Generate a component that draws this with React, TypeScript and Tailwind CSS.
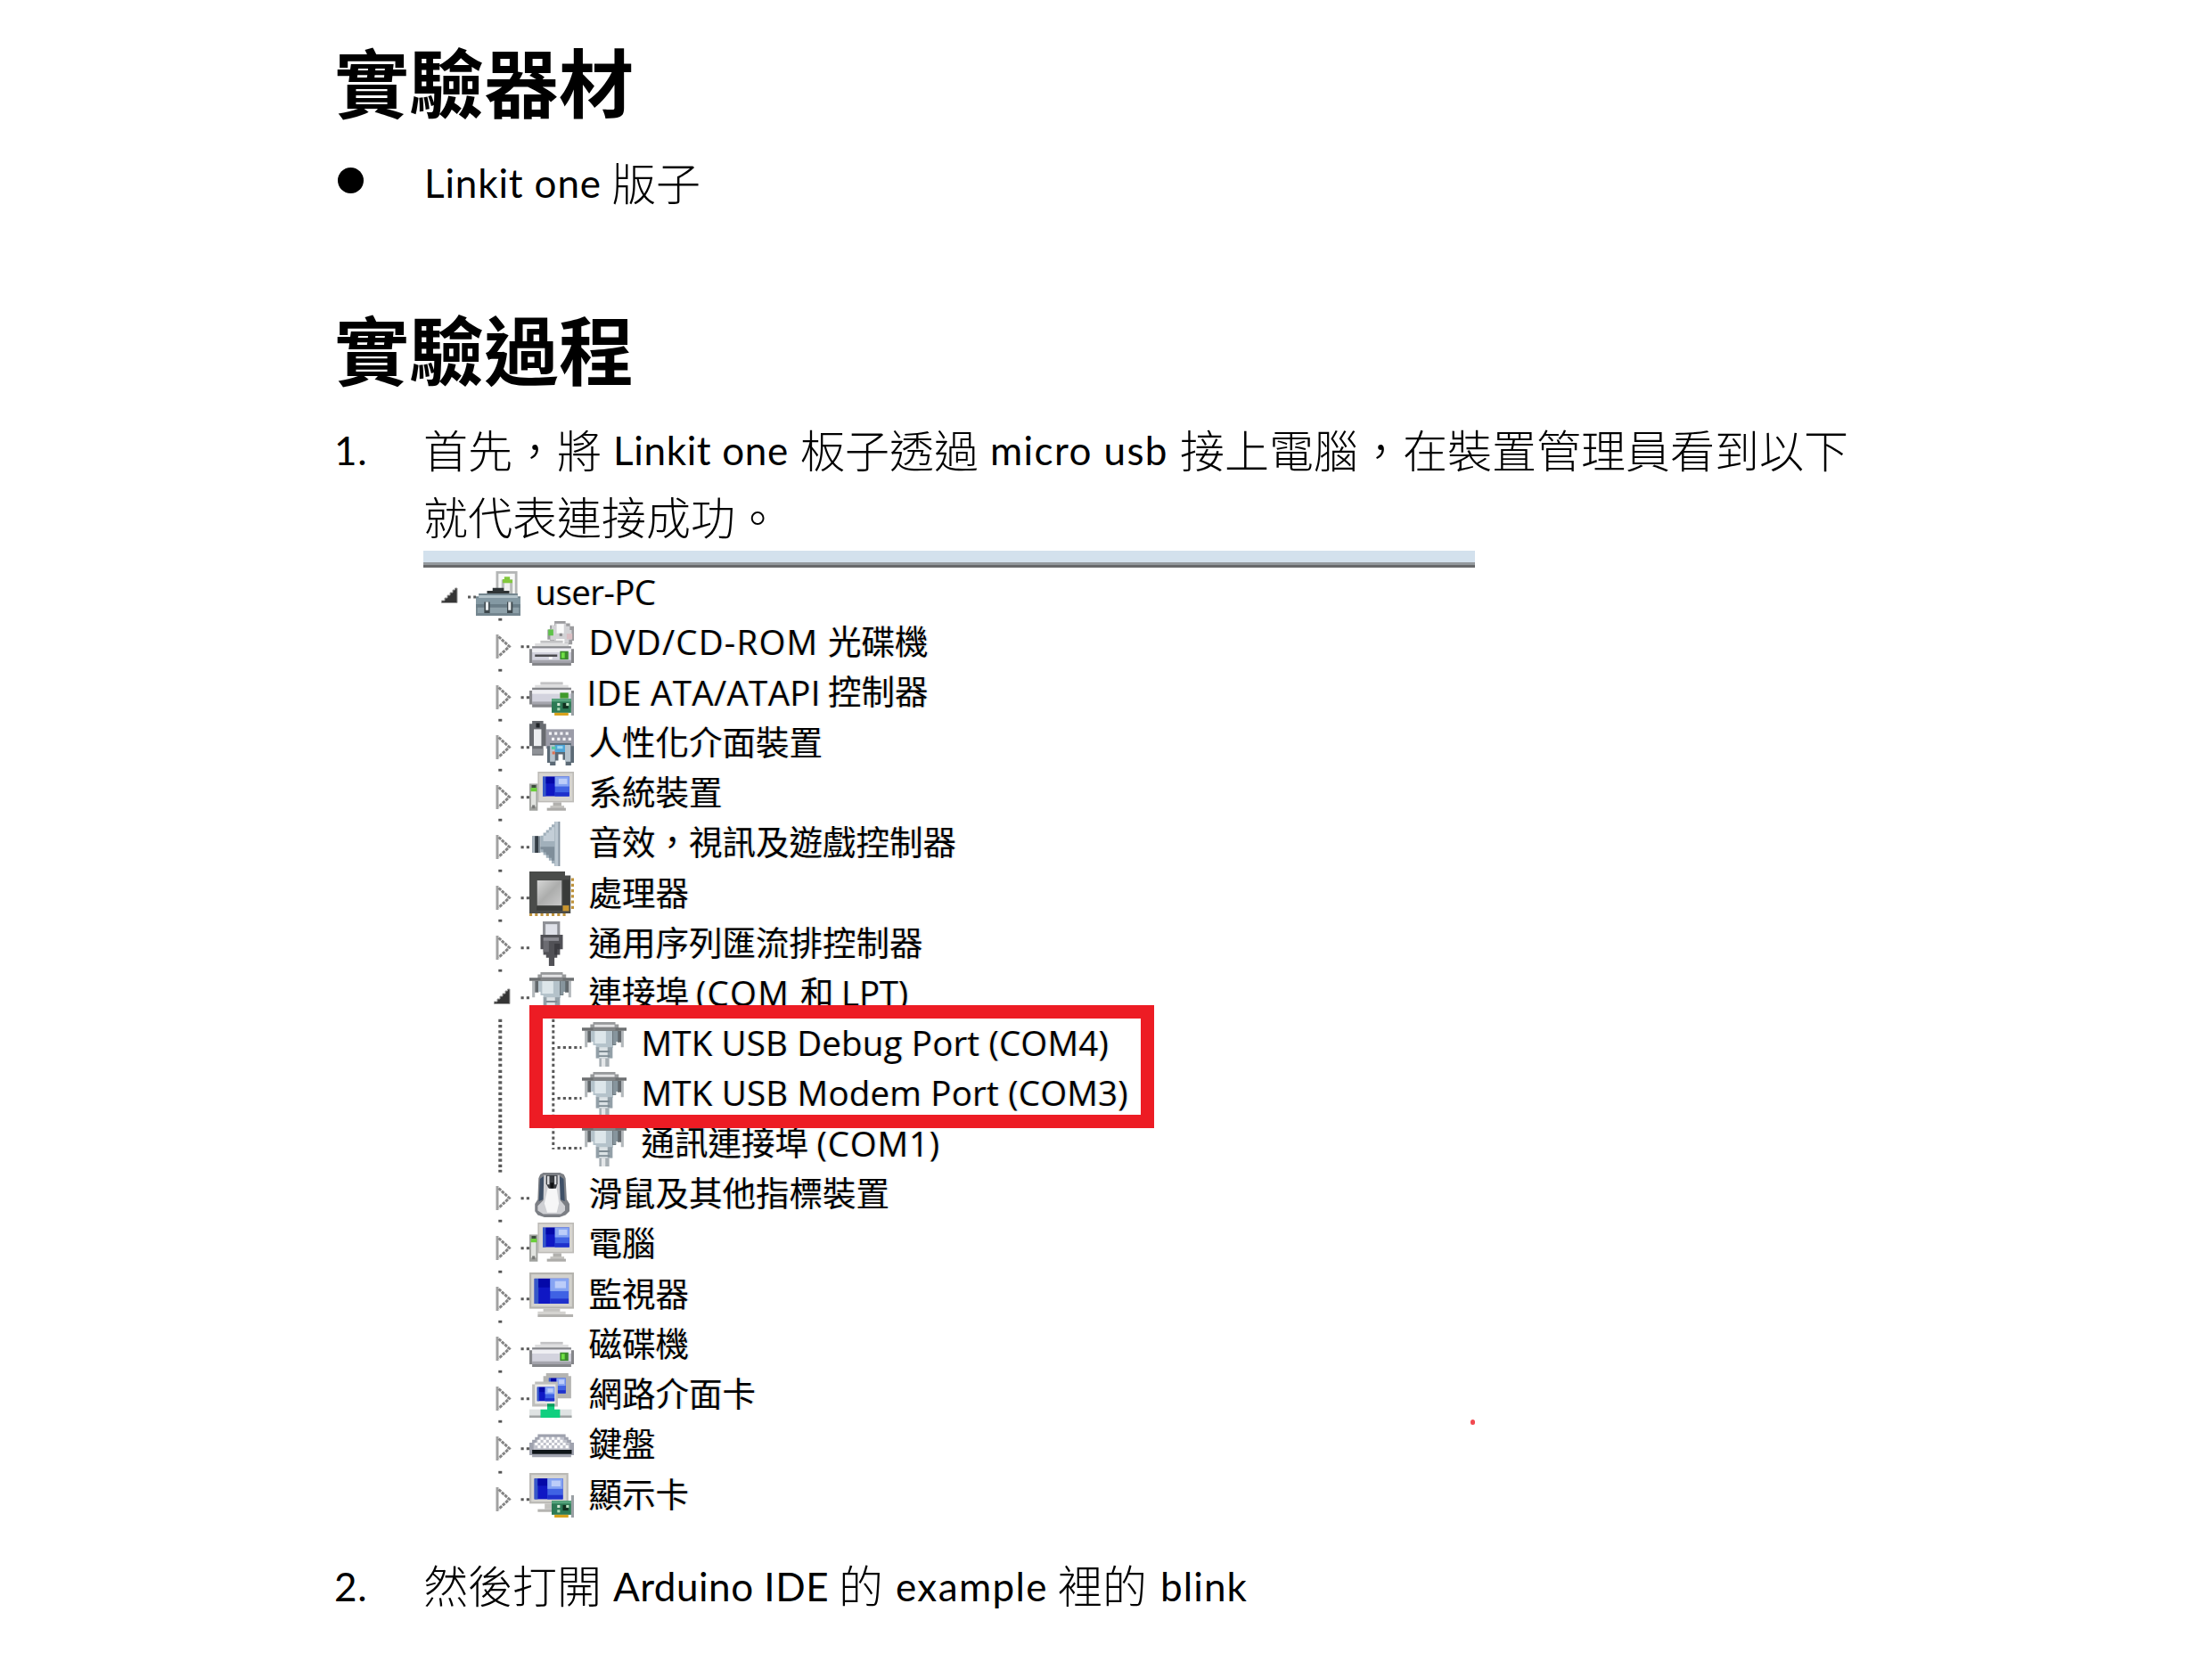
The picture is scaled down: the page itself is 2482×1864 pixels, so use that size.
import React from "react";

const PITCH = 56.25;

type Kind = "root" | "item" | "open" | "leaf" | "last";
type Run = { t: string; w: string; cjk?: boolean };

/* ---------- shared icon parts (16 x 16 grid) ---------- */

function Screen({ x, y, w, h }: { x: number; y: number; w: number; h: number }) {
  return (
    <g>
      <rect x={x} y={y} width={w} height={h} fill="#0f17c4" />
      <rect x={x} y={y} width={w * 0.12} height={h} fill="#3658c8" />
      <rect x={x + w * 0.12} y={y} width={w * 0.34} height={h * 0.35} fill="#0408a8" />
      <rect x={x + w * 0.46} y={y} width={w * 0.54} height={h} fill="#3f62e4" />
      <rect x={x + w * 0.46} y={y} width={w * 0.54} height={h * 0.5} fill="#86a4f2" />
      <rect x={x + w * 0.6} y={y + h * 0.1} width={w * 0.32} height={h * 0.28} fill="#bccdf9" />
      <rect x={x + w * 0.46} y={y + h * 0.8} width={w * 0.54} height={h * 0.2} fill="#1f31cc" />
    </g>
  );
}

function Card() {
  return (
    <g>
      <rect x="15" y="8" width="1" height="8" fill="#9aa0a4" />
      <rect x="8" y="10" width="7" height="5" fill="#2d7a55" />
      <rect x="8" y="10" width="7" height="1" fill="#55a47c" />
      <rect x="10" y="11.5" width="1" height="1" fill="#d5ead8" />
      <rect x="10" y="13.2" width="1" height="1" fill="#a8d8b4" />
      <rect x="12" y="11.5" width="2" height="2" fill="#10301f" />
      <rect x="13.2" y="11.5" width="1" height="1" fill="#b8e0c0" />
      <rect x="9" y="15" width="5" height="1" fill="#d9a21c" />
    </g>
  );
}

function Drive({ y, slot, led = true }: { y: number; slot?: boolean; led?: boolean }) {
  return (
    <g>
      <path d={`M4 ${y - 2}h8v1h2v1h1v1H1v-1h1v-1h2z`} fill="#dededf" />
      <rect x="4" y={y - 2} width="8" height="0.8" fill="#c2c2c4" />
      <path d={`M1 ${y}h14v1h1v5h-1v1H1v-1H0v-5h1z`} fill="#85868a" />
      <rect x="1" y={y + 0.8} width="14" height="4.8" fill="#d3d3de" />
      <rect x="1" y={y + 0.8} width="14" height="1.4" fill="#efeff3" />
      <rect x="1" y={y + 5} width="14" height="1" fill="#a5a5ad" />
      {slot && <rect x="2" y={y + 3} width="8" height="0.8" fill="#4b4b4f" />}
      {slot && <rect x="7" y={y + 3.8} width="1.2" height="0.9" fill="#ffffff" />}
      {led && <rect x="11" y={y + 1.8} width="3" height="3" fill="#3b8a2c" />}
      {led && <rect x="11.5" y={y + 2.3} width="1.2" height="2" fill="#6fe045" />}
    </g>
  );
}

const icons: Record<string, React.ReactNode> = {
  toolbox: (
    <g>
      <path d="M7.2 0h7.7v9H7.2z" fill="#b4b6b6" />
      <path d="M8.1 0.9h5.9v8H8.1z" fill="#f8f9f8" />
      <path d="M9.2 3h4v5h-4z" fill="#b9bcbb" />
      <path d="M10.2 4.2h2V8h-2z" fill="#f0f0f0" />
      <path d="M10.2 2h2v1h.9v1.2H9.6V2.9h.6z" fill="#83c83d" />
      <path d="M6 6h4v1h2v1H4V7h2z" fill="#2f3436" />
      <path d="M1 8h14v1h1v7H0V9h1z" fill="#74868f" />
      <path d="M1 8.6h14v1.1H1z" fill="#b3c3ca" />
      <path d="M0 9.7h16v2.1H0z" fill="#8499a3" />
      <path d="M0 11.8h16v1.3H0z" fill="#6b7e88" />
      <path d="M.6 13h14.8v2H.6z" fill="#8ea1aa" />
      <path d="M3 11h2v4H3zM11.2 11h2v4h-2z" fill="#3d474c" />
      <path d="M3.5 11h1v3h-1zM11.6 11h1v3h-1z" fill="#e8edef" />
    </g>
  ),
  dvd: (
    <g>
      <path d="M9 0h4v.8h1.6v1H16V7h-.6v1.4H14V9H8.6V8H7.4V6.6h-.9V3h.9V1.5H9z" fill="#9b9b9e" />
      <path d="M9.2.9h4v.9h1.3v1.4h.7v3.4h-1v1.3H9V6.8H7.5V2.8H8V1.6h1.2z" fill="#d2d2d5" />
      <path d="M9.8 1h2.6v3.4H9.8zM9.6 6.4h3v1.8h-3z" fill="#fafafa" />
      <path d="M10.8 4.4h1v1h-1z" fill="#88888b" />
      <path d="M13.4 4.5h2v2h-2z" fill="#d9bfc4" />
      <path d="M6.8 3h1.8v2.2H6.8z" fill="#5fc34a" />
      <Drive y={9} slot />
    </g>
  ),
  ide: (
    <g>
      <Drive y={6} led={false} />
      <rect x="11" y="7.8" width="3" height="2" fill="#3f9a2c" />
      <Card />
    </g>
  ),
  hid: (
    <g>
      <path d="M6 3h10v7H6z" fill="#9b9ca8" />
      <path
        d="M7 4h1v1H7zM9 4h1v1H9zM11 4h1v1h-1zM13 4h1v1h-1zM8 6h1v1H8zM10 6h1v1h-1zM12 6h1v1h-1zM14 6h1v1h-1z"
        fill="#f3f3f6"
      />
      <path d="M1 0h4v1h1v8H5v3.4H1V9H0V1h1z" fill="#686b70" />
      <path d="M1.6 3h2.7v6H1.6z" fill="#eceef0" />
      <path d="M2.4 .8h1.3v1.6H2.4z" fill="#1f2226" />
      <path d="M1 10h4v2H1z" fill="#8f9297" />
      <path d="M7.400 8h7.600v1h1v6h-1v1h-2v-2h-1v-2h-1.600v2.200H9.400V16H7.400v-1H6.400V9h1z" fill="#5c6a76" />
      <path d="M7.400 8.600h1.800v6H7.400zM12.800 8.600h2v6h-2z" fill="#b6c3cd" />
      <path d="M9.200 8.600h3.600v2.600H9.200z" fill="#4ea5d8" />
      <path d="M8 9.200h1.400v1H8z" fill="#57c9a0" />
      <path d="M8.200 11h1v1h-1z" fill="#e07050" />
      <path d="M10 9h2v1h-2z" fill="#9cd6f2" />
    </g>
  ),
  computer: (
    <g>
      <rect x="3" y="0" width="13" height="11" fill="#bdbbb7" />
      <rect x="3.5" y="0.5" width="12" height="10" fill="#d6d4d0" />
      <Screen x={4.8} y={1.8} w={9.5} h={7} />
      <rect x="8.5" y="11" width="3" height="2" fill="#b2b1ae" />
      <rect x="7.5" y="12.2" width="5" height="1" fill="#c4c3c0" />
      <rect x="6.3" y="13" width="6.8" height="1" fill="#adaca9" />
      <rect x="0" y="4.3" width="3" height="9.7" fill="#a0a29e" />
      <rect x="0.6" y="6" width="1.8" height="6.6" fill="#e2e4e0" />
      <rect x="0.8" y="4.8" width="1.6" height="1" fill="#3c4c3c" />
      <rect x="0.5" y="5.8" width="2.2" height="1.3" fill="#6bd03a" />
      <rect x="1" y="12" width="1" height="1.2" fill="#777977" />
    </g>
  ),
  speaker: (
    <g>
      <rect x="1" y="5.2" width="3" height="6" fill="#7d8a94" />
      <rect x="1" y="5.2" width="1" height="6" fill="#a7b2bb" />
      <rect x="2" y="5.2" width="1.2" height="6" fill="#343d45" />
      <path d="M4 5h1V4h1V3h1V2h1V1h1V0h1.8v16H9v-1H8v-1H7v-1H6v-1H5v-1H4z" fill="#a1b0bb" />
      <path d="M5 5h1V4h1V3h1V2h1v5H5z" fill="#c3ced7" />
      <path d="M4 9h5v5H8v-1H7v-1H6v-1H5v-1H4z" fill="#7f8e9a" />
      <path d="M9.2 0h1.7v16H9.2z" fill="#bcc8d1" />
      <path d="M10.4 0h.6v16h-.6z" fill="#85939e" />
    </g>
  ),
  cpu: (
    <g>
      <path d="M0 0h12.8v1.4h2V15H0z" fill="#4a4c4a" />
      <path d="M12 3h2.4v9H12z" fill="#393b39" />
      <path d="M2.6 12.4H12V14H2.6z" fill="#3a3c3a" />
      <rect x="2.8" y="3.2" width="8.8" height="9" fill="url(#chip)" />
      <rect x="12" y="12.2" width="2.2" height="2" fill="#c9952e" />
      <path
        d="M0 15h1v1H0zM2 15h1v1H2zM4 15h1v1H4zM6 15h1v1H6zM8 15h1v1H8zM10 15h1v1h-1zM12 15h1v1h-1z"
        fill="#bf933c"
      />
      <path
        d="M15 2.4h1v1h-1zM15 4.4h1v1h-1zM15 6.4h1v1h-1zM15 8.4h1v1h-1zM15 10.4h1v1h-1zM15 12.4h1v1h-1z"
        fill="#bf933c"
      />
    </g>
  ),
  usb: (
    <g>
      <rect x="4.8" y="0" width="6.2" height="5" fill="#8f9197" />
      <rect x="5.8" y="1" width="4.2" height="4" fill="#dfe1e9" />
      <path d="M4 4.8h8V10h-1v2h-1v1H9v3H7v-3H6v-1H5v-2H4z" fill="#515156" />
      <path d="M5 5.8h5.6V7H5z" fill="#8b8b92" />
      <path d="M5 7h2v4H5z" fill="#6c6c72" />
      <path d="M9 8h2v2h-1v2H9z" fill="#3b3b40" />
    </g>
  ),
  port: (
    <g>
      <path d="M4 0h8v.8h1.2V3H3V.8h1z" fill="#97999b" />
      <path d="M4.5 .9h7.2v.9H4.500z" fill="#e2e3e4" />
      <path d="M1 3h1v6H1zM14 3h1v6h-1z" fill="#b3b8bb" />
      <path d="M2 3h1.300v4.300H2zM12.800 3h1.300v4.300h-1.300z" fill="#62686c" />
      <path d="M3.200 3h9.800v4h-.8v1.300h-1V9.200H5V8.300H4V7h-.8z" fill="#b4c2ca" />
      <path d="M4.600 3.100h4v4.600h-4z" fill="#dde6ea" />
      <path d="M11 3.100h2V7h-.8v1.200H11z" fill="#8795 9d" />
      <path d="M11 3.100h2V7h-.8v1.200H11z" fill="#87959d" />
      <path d="M0 2h16v1.100H0z" fill="#6c6f71" />
      <path d="M4 2h8v1.100H4z" fill="#808385" />
      <path d="M5 9h6v4H5z" fill="#93a0a8" />
      <path d="M6.200 9h3v4h-3z" fill="#dbe2e5" />
      <path d="M6 10.200h4v.7H6zM6 11.900h4v.6H6z" fill="#7f8c94" />
      <path d="M6.200 13h3.600v3H6.200z" fill="#a6aeb3" />
      <path d="M7 13h1.400v3H7z" fill="#e4e7e9" />
    </g>
  ),
  mouse: (
    <g>
      <path d="M5 0h6l1.400.6.6 1.400.4 7.600 1 1.600v2.600L13 15.200 10.800 16H5.400L3 15.200 2 13.800v-2.600l1-1.600L3.300 2l.6-1.400z" fill="#7c7f85" />
      <path d="M3.800 2.200l1.400-1v8.300l-1.800.7zM12.300 2.200l-1.500-1v8.300l1.900.7z" fill="#3f5067" />
      <path d="M5.200.9h5.600l.3 9 1.700 2v1.700l-1.500 1.300H5l-2-1.300v-1.700l2-2z" fill="#cfd0d4" />
      <path d="M6.600 5.500h3.200l.8 5.500-.8 3.300H6.400L5.400 11z" fill="#f6f6f7" />
      <path d="M6 .9h4.100v3L9.500 5.700H7L6 4z" fill="#3a3d42" />
      <path d="M6.400 1.200h.8v3h-.8zM9 1.200h.7v3H9z" fill="#d9dbde" />
      <path d="M7.500 3.600h1.200v2H7.500z" fill="#0f1012" />
    </g>
  ),
  monitor: (
    <g>
      <rect x="0" y="0" width="16" height="13" fill="#b5b4af" />
      <rect x="0.700" y="0.700" width="14.600" height="11.600" fill="#d3d2cd" />
      <Screen x={1.8} y={2.2} w={12.3} h={9} />
      <rect x="5" y="13" width="6" height="1.200" fill="#c4c3c0" />
      <rect x="3" y="14" width="10" height="1" fill="#d4d3d0" />
      <rect x="3" y="15" width="12.700" height="1" fill="#b3b2af" />
    </g>
  ),
  disk: <Drive y={9} />,
  network: (
    <g>
      <path d="M6 0h8v1h1v8H6V8H5V1h1z" fill="#b4b4b2" />
      <Screen x={7} y={1.8} w={6} h={5.4} />
      <path d="M2 3h8.200v9H1V4h1z" fill="#bebebb" />
      <path d="M2 4h7.400v7H2z" fill="#e8e8e6" />
      <Screen x={2.8} y={5} w={6.2} h={5} />
      <rect x="0" y="13" width="15.200" height="3" fill="#dfe3e3" />
      <rect x="0" y="15.200" width="15.200" height="0.800" fill="#a0a4a4" />
      <path d="M6.400 11h2.600v2h2v3H4v-3h2.400z" fill="#10cf7f" />
      <path d="M6.400 11h2.600v1H6.400z" fill="#0a9a5c" />
    </g>
  ),
  keyboard: (
    <g>
      <path d="M3 4h10v1h1v1h1v1h1v4.500h-1v.7H1v-.7H0V7h1V6h1V5h1z" fill="#9fa2ae" />
      <path d="M3.500 5h9v1h1v1h1v2.600h-13V7h1V6h1z" fill="#c0c2cb" />
      <path
        d="M4 5h1v1H4zM6 5h1v1H6zM8 5h1v1H8zM10 5h1v1h-1zM3 6h1v1H3zM5 6h1v1H5zM7 6h1v1H7zM9 6h1v1H9zM11 6h1v1h-1zM2 7h1v1H2zM4 7h1v1H4zM6 7h1v1H6zM8 7h1v1H8zM10 7h1v1h-1zM12 7h1v1h-1zM3 8h1v1H3zM5 8h1v1H5zM7 8h1v1H7zM9 8h1v1H9zM11 8h1v1h-1zM13 8h1v1h-1z"
        fill="#ffffff"
      />
      <rect x="1" y="9.600" width="14.200" height="1.500" fill="#0e1518" />
    </g>
  ),
  display: (
    <g>
      <rect x="0" y="0" width="14" height="11" fill="#bab9b5" />
      <rect x="0.700" y="0.700" width="12.600" height="9.600" fill="#d6d5d1" />
      <Screen x={1.8} y={2} w={10.2} h={7.4} />
      <rect x="5.500" y="11" width="2.500" height="2" fill="#c4c3c0" />
      <rect x="3" y="13" width="5" height="1" fill="#b5b4b1" />
      <Card />
    </g>
  ),
};

function Icon({ name }: { name: string }) {
  return (
    <svg className="relative top-[0.5px] h-[50px] w-[50px] shrink-0" viewBox="0 0 16 16">
      <defs>
        <linearGradient id="chip" x1="0" y1="0" x2="1" y2="1">
          <stop offset="0" stopColor="#d6d6d6" />
          <stop offset="0.5" stopColor="#acadac" />
          <stop offset="1" stopColor="#c9c9c9" />
        </linearGradient>
      </defs>
      {icons[name]}
    </svg>
  );
}

/* Guide lines and expander arrow in front of a tree row */
function Guide({ kind }: { kind: Kind }) {
  const dash = { stroke: "#5a5a5a", strokeWidth: 3, strokeDasharray: "3.2 3.05" };
  if (kind === "root")
    return (
      <svg className="h-full w-[59px] shrink-0" viewBox="0 0 59 56.25">
        <path d="M38 23v16.500H20.500V37H24v-3h3v-3h3v-3h3v-3h2.500v-2z" fill="#353535" stroke="#9a9a9a" strokeWidth="1" />
        <path d="M50 33h9" {...dash} />
      </svg>
    );
  if (kind === "leaf" || kind === "last")
    return (
      <svg className="h-full w-[178px] shrink-0" viewBox="0 0 178 56.25">
        <path d="M86.300 0.800v56.250" {...dash} strokeWidth={4} />
        <path d={kind === "last" ? "M145.800 0.800v33" : "M145.800 0.800v56.250"} {...dash} />
        <path d="M150.500 32.500h27" {...dash} />
      </svg>
    );
  return (
    <svg className="h-full w-[119px] shrink-0" viewBox="0 0 119 56.25">
      <rect x="84.300" y="0.800" width="4" height="2.800" fill="#555" />
      {kind === "open" ? (
        <path d="M97 23v16.500H79.500V37H83v-3h3v-3h3v-3h3v-3h2.500v-2z" fill="#353535" stroke="#9a9a9a" strokeWidth="1" />
      ) : (
        <g fill="none">
          <path d="M83 19v27" stroke="#a2a2a2" strokeWidth="3" />
          <path d="M84.500 21.500l12 11-12 11" stroke="#858585" strokeWidth="3" strokeDasharray="3.600 1" />
        </g>
      )}
      <path d="M109.500 32.800h9.500" {...dash} />
    </svg>
  );
}

const rows: { kind: Kind; icon: string; runs: Run[] }[] = [
  { kind: "root", icon: "toolbox", runs: [{ t: "user-PC", w: "tracking-[-0.6px]" }] },
  {
    kind: "item",
    icon: "dvd",
    runs: [
      { t: "DVD/CD-ROM", w: "w-[268.500px] tracking-[1.200px]" },
      { t: "光碟機", w: "", cjk: true },
    ],
  },
  {
    kind: "item",
    icon: "ide",
    runs: [
      { t: "IDE ATA/ATAPI", w: "-ml-[2px] w-[270.500px] tracking-[0.350px]" },
      { t: "控制器", w: "", cjk: true },
    ],
  },
  { kind: "item", icon: "hid", runs: [{ t: "人性化介面裝置", w: "", cjk: true }] },
  { kind: "item", icon: "computer", runs: [{ t: "系統裝置", w: "", cjk: true }] },
  { kind: "item", icon: "speaker", runs: [{ t: "音效，視訊及遊戲控制器", w: "", cjk: true }] },
  { kind: "item", icon: "cpu", runs: [{ t: "處理器", w: "", cjk: true }] },
  { kind: "item", icon: "usb", runs: [{ t: "通用序列匯流排控制器", w: "", cjk: true }] },
  {
    kind: "open",
    icon: "port",
    runs: [
      { t: "連接埠", w: "w-[120.500px]", cjk: true },
      { t: "(COM", w: "w-[117px] tracking-[1.200px]" },
      { t: "和", w: "w-[46px]", cjk: true },
      { t: "LPT)", w: "tracking-[-0.2px]" },
    ],
  },
  { kind: "leaf", icon: "port", runs: [{ t: "MTK USB Debug Port (COM4)", w: "tracking-[0.160px]" }] },
  { kind: "leaf", icon: "port", runs: [{ t: "MTK USB Modem Port (COM3)", w: "tracking-[0.200px]" }] },
  {
    kind: "last",
    icon: "port",
    runs: [
      { t: "通訊連接埠", w: "w-[197px]", cjk: true },
      { t: "(COM1)", w: "tracking-[0.800px]" },
    ],
  },
  { kind: "item", icon: "mouse", runs: [{ t: "滑鼠及其他指標裝置", w: "", cjk: true }] },
  { kind: "item", icon: "computer", runs: [{ t: "電腦", w: "", cjk: true }] },
  { kind: "item", icon: "monitor", runs: [{ t: "監視器", w: "", cjk: true }] },
  { kind: "item", icon: "disk", runs: [{ t: "磁碟機", w: "", cjk: true }] },
  { kind: "item", icon: "network", runs: [{ t: "網路介面卡", w: "", cjk: true }] },
  { kind: "item", icon: "keyboard", runs: [{ t: "鍵盤", w: "", cjk: true }] },
  { kind: "item", icon: "display", runs: [{ t: "顯示卡", w: "", cjk: true }] },
];

function DeviceTree() {
  return (
    <div className="relative w-[1180px]">
      <div className="h-[13px] bg-[#d3e1ed]" />
      <div className="h-[3px] bg-[#94999d]" />
      <div className="h-[3px] bg-[#68696b]" />
      {rows.map((r, i) => (
        <div key={i} className="flex items-center" style={{ height: PITCH }}>
          <Guide kind={r.kind} />
          <Icon name={r.icon} />
          <div className="ml-[16.500px] flex items-baseline whitespace-nowrap leading-[56px] text-black [text-shadow:-1.5px_0_0_#ffc98a66,1.5px_0_0_#8fc8ff66]">
            {r.runs.map((s, j) => (
              <span
                key={j}
                className={
                  (s.cjk
                    ? "-top-[3px] text-[37.5px] font-['Noto_Sans_CJK_TC',sans-serif] "
                    : "-top-[1.500px] text-[38.5px] font-['Open_Sans','Noto_Sans',sans-serif] ") +
                  "relative shrink-0 " +
                  s.w
                }
              >
                {s.t}
              </span>
            ))}
          </div>
        </div>
      ))}
      <div className="absolute left-[119px] top-[510px] h-[138px] w-[701px] border-[15.500px] border-[#ed1c24]" />
      <div className="absolute left-[1175px] top-[975px] h-[6px] w-[5px] rounded-full bg-[#ed1c24]/80" />
    </div>
  );
}

function Line({ runs }: { runs: Run[] }) {
  return (
    <p className="flex h-[75px] items-baseline whitespace-nowrap leading-[75px]">
      {runs.map((s, i) => (
        <span
          key={i}
          className={
            (s.cjk
              ? "-top-[2.500px] text-[50px] font-light font-['Noto_Sans_CJK_TC',sans-serif] "
              : "-top-[5px] left-[1px] text-[44px] font-['Lato',sans-serif] ") +
            "relative shrink-0 " +
            s.w
          }
        >
          {s.t}
        </span>
      ))}
    </p>
  );
}

export default function App() {
  return (
    <main className="h-[1864px] w-[2482px] overflow-hidden bg-white pl-[375px] pt-[25px] text-black">
      <h1 className="h-[130px] text-[84px] font-bold leading-[130px] font-['Noto_Sans_CJK_TC',sans-serif]">實驗器材</h1>
      <div className="mt-[13px] flex">
        <div className="w-[100px] pl-[4px] pt-[20px]">
          <div className="h-[29px] w-[29px] rounded-full bg-black" />
        </div>
        <Line
          runs={[
            { t: "Linkit one", w: "w-[211px] tracking-[0.850px]" },
            { t: "版子", w: "", cjk: true },
          ]}
        />
      </div>
      <h1 className="mt-[82px] h-[130px] text-[84px] font-bold leading-[130px] font-['Noto_Sans_CJK_TC',sans-serif]">
        實驗過程
      </h1>
      <ol>
        <li className="mt-[13px] flex">
          <span className="w-[100px] text-[44px] leading-[75px] tracking-[0.800px] font-['Lato',sans-serif]">1.</span>
          <div>
            <Line
              runs={[
                { t: "首先，將", w: "w-[212px]", cjk: true },
                { t: "Linkit one", w: "w-[211px] tracking-[0.650px]" },
                { t: "板子透過", w: "w-[212px]", cjk: true },
                { t: "micro usb", w: "w-[214px] tracking-[1.400px]" },
                { t: "接上電腦，在裝置管理員看到以下", w: "", cjk: true },
              ]}
            />
            <Line runs={[{ t: "就代表連接成功。", w: "", cjk: true }]} />
            <DeviceTree />
          </div>
        </li>
        <li className="mt-[37px] flex">
          <span className="w-[100px] text-[44px] leading-[75px] tracking-[0.800px] font-['Lato',sans-serif]">2.</span>
          <Line
            runs={[
              { t: "然後打開", w: "w-[212px]", cjk: true },
              { t: "Arduino IDE", w: "w-[254px] tracking-[0.500px]" },
              { t: "的", w: "w-[63px]", cjk: true },
              { t: "example", w: "w-[183px] tracking-[1.400px]" },
              { t: "裡的", w: "w-[114px]", cjk: true },
              { t: "blink", w: "tracking-[1.100px]" },
            ]}
          />
        </li>
      </ol>
    </main>
  );
}
